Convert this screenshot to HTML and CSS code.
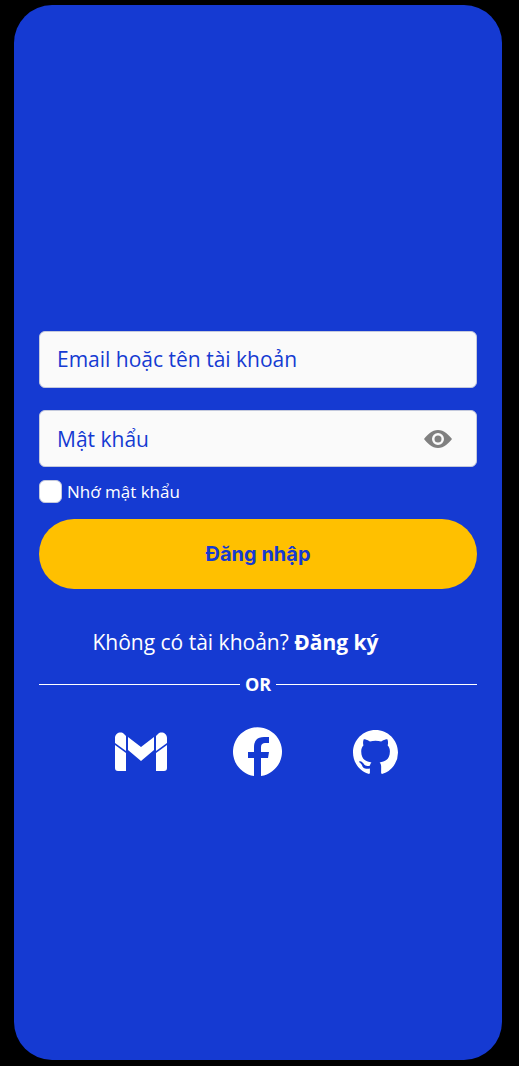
FILE: index.html
```html
<!DOCTYPE html>
<html lang="vi">
<head>
<meta charset="utf-8">
<meta name="viewport" content="width=device-width, initial-scale=1">
<title>Đăng nhập</title>
<link rel="stylesheet" href="styles.css">
</head>
<body>
<main class="screen">
  <form class="login">
    <div class="field">
      <input class="field-input" type="text" aria-label="Email hoặc tên tài khoản" placeholder="Email hoặc tên tài khoản">
    </div>
    <div class="field">
      <input class="field-input" type="password" aria-label="Mật khẩu" placeholder="Mật khẩu">
      <button class="reveal" type="button" aria-label="Hiện mật khẩu">
        <svg width="28" height="18" viewBox="0 0 28 18"><path fill="#808080" fill-rule="evenodd" d="M0 9C3 5 8 0 14 0s11 5 14 9c-3 4-8 9-14 9S3 13 0 9Zm14-6a6 6 0 1 0 0 12 6 6 0 0 0 0-12Z"/><circle cx="14" cy="9" r="3.5" fill="#808080"/></svg>
      </button>
    </div>
    <label class="remember"><input class="remember-box" type="checkbox">Nhớ mật khẩu</label>
    <button class="submit" type="submit">Đăng nhập</button>
  </form>
  <p class="signup">Không có tài khoản? <a class="signup-link" href="#">Đăng ký</a></p>
  <div class="divider">OR</div>
  <nav class="social" aria-label="Đăng nhập bằng">
    <a class="social-link" href="#" aria-label="Gmail">
      <svg width="52" height="40" viewBox="0 0 52 40" fill="#fff"><path d="M0 11V6C0 1 6-1 9 2l2 2v15ZM0 13l11 8v18H3q-3 0-3-3ZM13 5l13 10L39 5v13L26 29 13 18ZM52 11V6c0-5-6-7-9-4l-2 2v15ZM52 13l-11 8v18h8q3 0 3-3Z"/></svg>
    </a>
    <a class="social-link" href="#" aria-label="Facebook">
      <svg width="50" height="50" viewBox="0 0 50 50" fill="#fff"><path d="M21 49A24.500 24.500 0 1 1 28 49V31h7l1-6h-8v-5c0-3 2-4 4-4h4v-6h-5c-7 0-10 4-10 10v5h-6v6h6Z"/></svg>
    </a>
    <a class="social-link" href="#" aria-label="GitHub">
      <svg width="45" height="45" viewBox="0 0 16 16" fill="#fff"><path d="M8 0C3.580 0 0 3.580 0 8c0 3.540 2.290 6.530 5.470 7.590.4.070.55-.17.55-.38 0-.19-.01-.82-.01-1.490-2.010.37-2.530-.49-2.690-.94-.09-.23-.48-.94-.82-1.130-.28-.15-.68-.52-.01-.53.63-.01 1.080.58 1.230.82.72 1.210 1.870.87 2.330.66.07-.52.28-.87.51-1.070-1.780-.2-3.640-.89-3.640-3.950 0-.87.31-1.590.82-2.150-.08-.2-.36-1.020.08-2.120 0 0 .67-.21 2.200.82.64-.18 1.320-.27 2-.27s1.360.09 2 .27c1.530-1.040 2.200-.82 2.200-.82.44 1.100.16 1.920.08 2.120.51.56.82 1.270.82 2.150 0 3.070-1.870 3.750-3.650 3.950.29.25.54.73.54 1.480 0 1.070-.01 1.930-.01 2.200 0 .21.15.46.55.38A8.010 8.010 0 0 0 16 8c0-4.420-3.580-8-8-8Z"/></svg>
    </a>
  </nav>
</main>
</body>
</html>
```
FILE: styles.css
```css
* { box-sizing: border-box; }

body {
  margin: 0;
  padding: 5px 17px 6px 14px;
  background: #000;
  color: #fff;
  font-family: "Open Sans", "Noto Sans", sans-serif;
}

.screen {
  min-height: calc(100vh - 11px);
  padding: 326px 25px 40px;
  border-radius: 38px;
  background: #153ad2;
}

.login {
  display: flex;
  flex-direction: column;
}

.field {
  display: flex;
  align-items: center;
  height: 57px;
  margin-bottom: 22px;
  padding: 0 24px 2px 17px;
  border: 1px solid #c4c9dc;
  border-radius: 6px;
  background: #fafafa;
}

.field + .field {
  margin-bottom: 13px;
  padding-bottom: 0;
}

.field-input {
  flex: 1;
  min-width: 0;
  padding: 0;
  border: 0;
  outline: 0;
  background: transparent;
  color: #153ad2;
  font: 21px/30px "Open Sans", "Noto Sans", sans-serif;
}

.field-input::placeholder {
  color: #153ad2;
  opacity: 1;
}

.reveal {
  display: flex;
  padding: 0;
  border: 0;
  background: none;
}

.remember {
  display: flex;
  align-items: center;
  align-self: flex-start;
  gap: 5px;
  height: 23px;
  margin-bottom: 16px;
  font-size: 17px;
}

.remember-box {
  appearance: none;
  width: 23px;
  height: 23px;
  margin: 0;
  border: 1px solid #c4c9dc;
  border-radius: 6px;
  background: #fff;
}

.remember-box:checked { background: #ffc000; }

.submit {
  height: 70px;
  border: 0;
  border-radius: 35px;
  background: #ffc000;
  color: #153ad2;
  font: bold 20px/30px Inter, Roboto, sans-serif;
}

.signup {
  margin: 38px 45px 0 0;
  font-size: 21px;
  line-height: 30px;
  text-align: center;
}

.signup-link {
  color: #fff;
  font-weight: bold;
  text-decoration: none;
}

.divider {
  display: flex;
  align-items: center;
  gap: 5px;
  margin-top: 14px;
  font-size: 18px;
  font-weight: bold;
  line-height: 26px;
}

.divider::before,
.divider::after {
  content: "";
  flex: 1;
  height: 1px;
  background: #fff;
}

.social {
  display: flex;
  justify-content: center;
  margin-top: 30px;
}

.social-link {
  display: flex;
  align-items: center;
  justify-content: center;
  width: 117px;
  height: 50px;
}
```
